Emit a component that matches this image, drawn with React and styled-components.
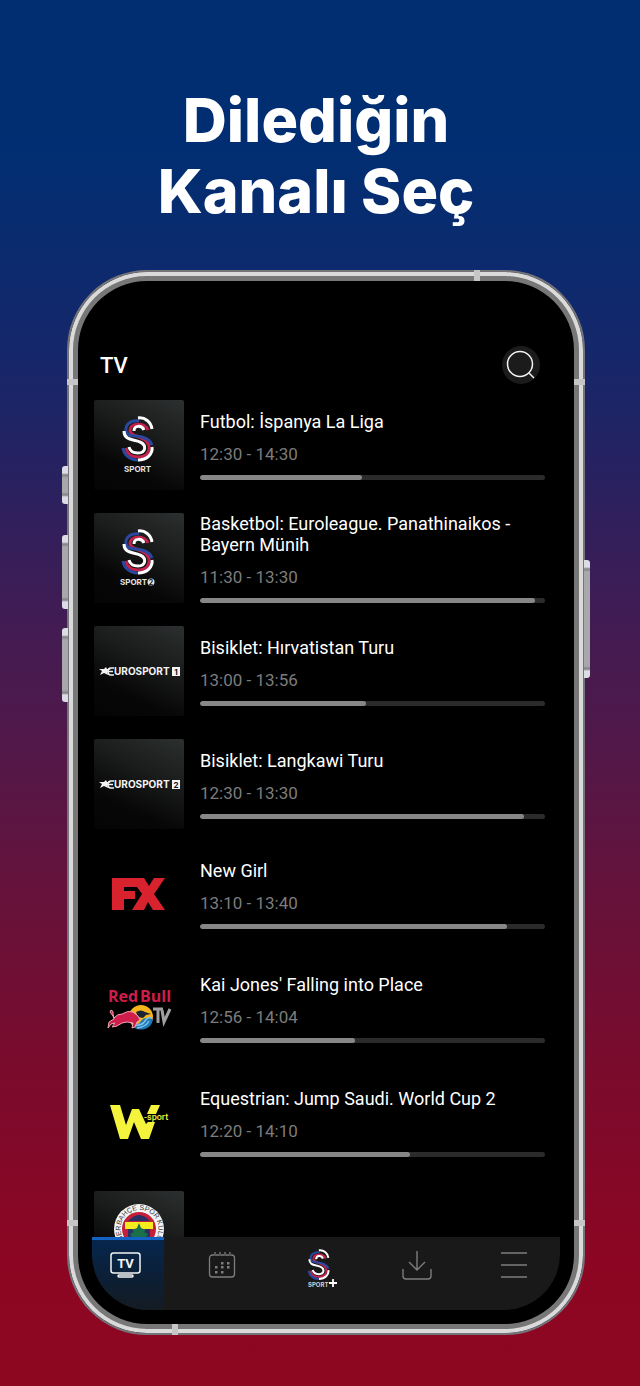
import styled, { createGlobalStyle, css } from "styled-components";

const GlobalStyle = createGlobalStyle`
  *, *::before, *::after {
    box-sizing: border-box;
    margin: 0;
    padding: 0;
  }

  body {
    font-family: Roboto, "Liberation Sans", sans-serif;
    color: #fff;
    background: #8e0721;
  }
`;

const Page = styled.main`
  display: flex;
  flex-direction: column;
  height: 100vh;
  min-height: 900px;
  padding: 85px 55px 51px 67px;
  background: linear-gradient(
    180deg,
    #012e70 0%,
    #012e72 11%,
    #16276a 26%,
    #2a215f 35%,
    #401c54 44%,
    #521849 54%,
    #681138 66%,
    #7c0b2c 78%,
    #8c0623 91%,
    #8e0721 100%
  );
`;

const Title = styled.h1`
  margin-bottom: 43px;
  padding-right: 20px;
  font-family: Inter, "Open Sans", sans-serif;
  font-size: 61px;
  font-weight: 800;
  line-height: 71px;
  text-align: center;
`;

const Phone = styled.div`
  position: relative;
  display: flex;
  flex: 1 1 0;
  flex-direction: column;
  min-height: 0;
  padding: 23px;
  border: 2px solid #74747a;
  border-radius: 80px;
  background: #000;
  box-shadow: inset 0 0 0 4px #dadada, inset 0 0 0 9px #777;
`;

const SideKey = styled.span`
  position: absolute;
  top: ${(props) => props.$top}px;
  width: 6px;
  height: ${(props) => props.$length}px;
  background: linear-gradient(
    #dcdce4 0 7px,
    #808086 9px,
    #a8a8ac 12px calc(100% - 12px),
    #808086 calc(100% - 9px),
    #dcdce4 calc(100% - 7px)
  );
  ${(props) =>
    props.$side === "left"
      ? css`
          left: -7px;
          border-radius: 3px 0 0 3px;
        `
      : css`
          right: -7px;
          border-radius: 0 3px 3px 0;
        `}
`;

const Antenna = styled.span`
  position: absolute;
  width: 11px;
  height: 6px;
  background: #c6c6c6;
  ${(props) => props.$place}
`;

const Screen = styled.div`
  display: flex;
  flex: 1 1 0;
  flex-direction: column;
  min-height: 0;
  border-radius: 16px 16px 56px 56px;
  overflow: hidden;
`;

const Header = styled.header`
  display: flex;
  align-items: center;
  justify-content: space-between;
  padding: 51px 20px 16px 8px;
`;

const Heading = styled.h2`
  font-size: 22px;
  font-weight: 500;
`;

const SearchButton = styled.button`
  display: grid;
  place-items: center;
  width: 38px;
  height: 38px;
  border: 0;
  border-radius: 50%;
  color: #f2f2f2;
  background: #1b1b1b;
`;

const Channels = styled.div`
  display: flex;
  flex: 1 1 0;
  flex-direction: column;
  gap: 20px;
  min-height: 0;
  padding: 0 15px 0 2px;
  overflow: hidden;
`;

const ChannelList = styled.ul`
  display: flex;
  flex: none;
  flex-direction: column;
  gap: ${(props) => props.$gap}px;
  list-style: none;
`;

const Channel = styled.li`
  display: grid;
  grid-template-columns: 90px 1fr;
  align-items: center;
  gap: 16px;
`;

const Tile = styled.div`
  height: 90px;
  border-radius: 2px;
  background: ${(props) =>
    props.$plain
      ? "#000"
      : "linear-gradient(205deg, #2d3030 0%, #1a1b1b 38%, #070707 72%, #040404 100%)"};

  & svg {
    display: block;
    width: 90px;
    height: 90px;
  }
`;

const Programme = styled.div`
  display: flex;
  flex-direction: column;
`;

const Name = styled.h3`
  font-size: 18px;
  font-weight: 400;
  line-height: 21px;
`;

const Time = styled.p`
  margin-top: 11px;
  color: #7c7c7c;
  font-size: 17px;
  line-height: 22px;
`;

const Progress = styled.progress`
  appearance: none;
  display: block;
  width: 100%;
  height: 5px;
  margin-top: 10px;
  border: 0;
  border-radius: 3px;
  overflow: hidden;

  &::-webkit-progress-bar {
    background: #2b2b2b;
  }

  &::-webkit-progress-value {
    border-radius: 3px;
    background: #878787;
  }
`;

const TabBar = styled.nav`
  display: flex;
  height: 73px;
  background: #191919;
`;

const Tab = styled.button`
  display: grid;
  place-items: start center;
  width: 30px;
  padding-top: 13px;
  border: 0;
  color: #7d7d7d;
  background: none;

  & svg {
    overflow: visible;
  }
`;

const ActiveTab = styled(Tab)`
  place-items: start;
  width: 72px;
  padding: 10px 0 0 18px;
  border-top: 3px solid #1463c4;
  color: #f4f4f4;
  background: linear-gradient(#06264d, #0c1f35 55%, #141b23);
`;

const OtherTabs = styled.div`
  display: flex;
  flex: 1;
  justify-content: space-between;
  padding: 0 31px 0 43px;
`;

function Strands() {
  return (
    <g fill="none" strokeWidth="3">
      <path d="M26 14C23 6 8 6 8 15C9 20 18 20 23 24C30 30 28 41 16 41C9 41 5 38 4 32" stroke="#c2214a" />
      <path d="M17 5C8 4 3 9 4 15C5 21 13 19 20 21C27 23 29 26 30 29" stroke="#2a48a0" />
      <path d="M16 2C23 1 29 6 30 13" stroke="#fff" />
      <path d="M22 14C20 9 12 9 12 15" stroke="#fff" />
      <path d="M2 15C2 25 12 23 18 26C25 29 24 37 16 37C11 37 8 35 7 31" stroke="#fff" />
      <path d="M30 31C31 38 25 44 16 44" stroke="#fff" />
      <path d="M16 44C8 44 2 39 1 32" stroke="#2a48a0" />
    </g>
  );
}

function SSport({ second }) {
  return (
    <svg viewBox="0 0 90 90" aria-hidden="true">
      <g transform="translate(28 16)">
        <Strands />
      </g>
      <text x={second ? 26 : 30} y="72" fill="#e4e4e4" fontFamily="Inter" fontSize="8" fontWeight="700">
        SPORT
      </text>
      {second && (
        <>
          <circle cx="57" cy="69" r="3.500" fill="#e4e4e4" />
          <text x="57" y="72" textAnchor="middle" fill="#111" fontFamily="Inter" fontSize="7" fontWeight="700">
            2
          </text>
        </>
      )}
    </svg>
  );
}

function Eurosport({ number }) {
  return (
    <svg viewBox="0 0 90 90" aria-hidden="true">
      <path d="M5 43h5l2-2 1 2h4l-4 2 1 4-4-2-4 2 2-4z" fill="#f4f4f4" />
      <path
        d="M20 42h-3q-3 0-3 3.500t3 3.500h3M12 45.500h7"
        fill="none"
        stroke="#f4f4f4"
        strokeWidth="1.600"
      />
      <text x="20" y="49" fill="#f4f4f4" fontFamily="Inter" fontSize="10" fontWeight="700">
        UROSPORT
      </text>
      <rect x="78" y="41" width="8" height="9" fill="#f4f4f4" />
      <text x="82" y="48.500" textAnchor="middle" fill="#111" fontFamily="Inter" fontSize="8" fontWeight="700">
        {number}
      </text>
    </svg>
  );
}

function Fx() {
  return (
    <svg viewBox="0 0 90 90" aria-hidden="true">
      <path
        d="M18 29h32l5 8 5-8h11L60 45l11 16H59l-5-8-4 8H38l10-16-5-7H30v4h11v8H30v11H18z"
        fill="#d8232e"
      />
    </svg>
  );
}

function RedBull() {
  return (
    <svg viewBox="0 0 90 90" aria-hidden="true">
      <text x="14" y="39" fill="#cf1d4c" fontFamily="Open Sans" fontSize="16" fontWeight="700">
        <tspan>Red</tspan>
        <tspan x="46">Bull</tspan>
      </text>
      <circle cx="47" cy="54" r="12" fill="#f6b51e" />
      <path d="M59 56a12 12 0 0 1-22 5q7 2 10-3t12-2z" fill="#1d79b5" />
      <path d="M40 62q8 1 11-4t7-3M43 65q9-1 12-7" fill="none" stroke="#7ec2e8" strokeWidth="1.500" />
      <path d="M42 49q5-3 9 0l6 2-5 1-3 3-5-1z" fill="#1c2631" />
      <path
        d="M17 47q3 1 2 4l1 4q3-4 8-4 6-4 11-2l5 4 2 4-3 2-2 5-3 1 1-5-6-1-5 1-5 3-5 1 3-4-4 1-3 4 1-6 5-3-1-3-3-4z"
        fill="#cf1d4c"
        stroke="#f0a4ac"
        strokeWidth="1"
      />
      <path d="M59 46h10M64 46v14M68 47l2 12 6-13" fill="none" stroke="#a0a0a0" strokeWidth="3" />
    </svg>
  );
}

function WSport() {
  return (
    <svg viewBox="0 0 90 90" aria-hidden="true">
      <path d="M16 28h10l6 20 6-16h7l7 15 2-2h7l-6 17h-8l-7-17-6 17h-8z" fill="#f5f43c" />
      <path d="M57 28h9l-4 9h-9z" fill="#f5f43c" />
      <text x="50" y="43" fill="#f5f43c" fontFamily="Roboto" fontSize="9" fontWeight="500">
        -sport
      </text>
    </svg>
  );
}

function Fenerbahce() {
  return (
    <svg viewBox="0 0 90 90" aria-hidden="true">
      <defs>
        <path id="crest" d="M45 57a19 19 0 1 1 1 0" />
      </defs>
      <circle cx="45" cy="38" r="25" fill="#f3f3f3" />
      <text fill="#333" fontFamily="Liberation Sans" fontSize="7">
        <textPath href="#crest" startOffset="50%" textAnchor="middle">
          FENERBAHÇE SPOR KULÜBÜ
        </textPath>
      </text>
      <circle cx="45" cy="38" r="17" fill="#c4203a" />
      <path d="M34 30q11-12 22 0z" fill="#2b2f63" />
      <path d="M31 31h28v7H31z" fill="#f4ec1c" />
      <path d="M34 38h22v12H34z" fill="#2b2f63" />
      <path d="M45 32l2 5 5 2-2 2 4 2-5 8h-8l-5-8 4-2-2-2 5-2z" fill="#1a7048" />
    </svg>
  );
}

function SearchIcon() {
  return (
    <svg width="30" height="30" viewBox="0 0 30 30" fill="none" stroke="currentColor" strokeWidth="1.500">
      <circle cx="14" cy="14" r="12.500" />
      <path d="M23 23l5 5" />
    </svg>
  );
}

function TvIcon() {
  return (
    <svg width="32" height="30" viewBox="0 0 32 30">
      <g fill="none" stroke="currentColor" strokeWidth="1.500">
        <rect x="1" y="3" width="29" height="20" rx="2.500" />
        <rect x="8" y="25" width="15" height="2" rx="1" />
      </g>
      <text x="15.500" y="18" textAnchor="middle" fill="currentColor" fontFamily="Roboto" fontSize="13" fontWeight="700">
        TV
      </text>
    </svg>
  );
}

function CalendarIcon() {
  return (
    <svg width="30" height="30" viewBox="0 0 30 30">
      <path
        d="M7 5H5.500a3 3 0 0 0-3 3v16a3 3 0 0 0 3 3h19a3 3 0 0 0 3-3V8a3 3 0 0 0-3-3H24M8 2v4M13 2v4M18 2v4M23 2v4M9 5h3M14 5h3M19 5h3"
        fill="none"
        stroke="currentColor"
        strokeWidth="1.300"
      />
      <path
        d="M14 12h2.500v2.500H14zM20 12h2.500v2.500H20zM8 16h2.500v2.500H8zM14 16h2.500v2.500H14zM20 16h2.500v2.500H20zM8 21h2.500v2.500H8zM14 21h2.500v2.500H14z"
        fill="currentColor"
      />
    </svg>
  );
}

function SPlusIcon() {
  return (
    <svg width="30" height="42" viewBox="0 0 30 42">
      <g transform="translate(4 -1) scale(0.680)">
        <Strands />
      </g>
      <text x="4" y="37" fill="#d0d0d0" fontFamily="Inter" fontSize="6" fontWeight="700">
        SPORT
      </text>
      <path d="M29 29v8M25 33h8" stroke="#fff" strokeWidth="1.800" />
    </svg>
  );
}

function DownloadIcon() {
  return (
    <svg width="30" height="30" viewBox="0 0 30 30" fill="none" stroke="currentColor" strokeWidth="1.400">
      <path d="M15 1v19M7 12l8 8 8-8M1 19v7a3 3 0 0 0 3 3h22a3 3 0 0 0 3-3v-7" />
    </svg>
  );
}

function MenuIcon() {
  return (
    <svg width="30" height="30" viewBox="0 0 30 30" fill="none" stroke="currentColor" strokeWidth="1.500">
      <path d="M2 3h26M2 15h26M2 27h26" />
    </svg>
  );
}

const sports = [
  { name: "Futbol: İspanya La Liga", time: "12:30 - 14:30", progress: 47, logo: <SSport /> },
  {
    name: "Basketbol: Euroleague. Panathinaikos - Bayern Münih",
    time: "11:30 - 13:30",
    progress: 97,
    logo: <SSport second />,
  },
  { name: "Bisiklet: Hırvatistan Turu", time: "13:00 - 13:56", progress: 48, logo: <Eurosport number="1" /> },
  { name: "Bisiklet: Langkawi Turu", time: "12:30 - 13:30", progress: 94, logo: <Eurosport number="2" /> },
];

const others = [
  { name: "New Girl", time: "13:10 - 13:40", progress: 89, logo: <Fx />, plain: true },
  { name: "Kai Jones' Falling into Place", time: "12:56 - 14:04", progress: 45, logo: <RedBull />, plain: true },
  {
    name: "Equestrian: Jump Saudi. World Cup 2",
    time: "12:20 - 14:10",
    progress: 61,
    logo: <WSport />,
    plain: true,
  },
];

function ChannelRow({ channel }) {
  return (
    <Channel>
      <Tile $plain={channel.plain}>{channel.logo}</Tile>
      <Programme>
        <Name>{channel.name}</Name>
        <Time>{channel.time}</Time>
        <Progress value={channel.progress} max="100" aria-label={channel.name} />
      </Programme>
    </Channel>
  );
}

export default function App() {
  return (
    <>
      <GlobalStyle />
      <Page>
        <Title>
          Dilediğin
          <br />
          Kanalı Seç
        </Title>
        <Phone>
          <SideKey $side="left" $top={194} $length={38} />
          <SideKey $side="left" $top={263} $length={74} />
          <SideKey $side="left" $top={356} $length={74} />
          <SideKey $side="right" $top={288} $length={118} />
          <Antenna $place="left: -2px; top: 107px;" />
          <Antenna $place="right: -2px; top: 107px;" />
          <Antenna $place="left: -2px; bottom: 107px;" />
          <Antenna $place="right: -2px; bottom: 107px;" />
          <Antenna $place="right: 103px; top: -2px; width: 6px; height: 11px;" />
          <Antenna $place="left: 103px; bottom: -2px; width: 6px; height: 11px;" />
          <Screen>
            <Header>
              <Heading>TV</Heading>
              <SearchButton aria-label="Ara">
                <SearchIcon />
              </SearchButton>
            </Header>
            <Channels>
              <ChannelList $gap={23}>
                {sports.map((channel) => (
                  <ChannelRow key={channel.name} channel={channel} />
                ))}
              </ChannelList>
              <ChannelList $gap={24}>
                {others.map((channel) => (
                  <ChannelRow key={channel.name} channel={channel} />
                ))}
                <Channel>
                  <Tile>
                    <Fenerbahce />
                  </Tile>
                </Channel>
              </ChannelList>
            </Channels>
            <TabBar>
              <ActiveTab aria-label="TV">
                <TvIcon />
              </ActiveTab>
              <OtherTabs>
                <Tab aria-label="Takvim">
                  <CalendarIcon />
                </Tab>
                <Tab aria-label="S Sport Plus">
                  <SPlusIcon />
                </Tab>
                <Tab aria-label="İndirilenler">
                  <DownloadIcon />
                </Tab>
                <Tab aria-label="Menü">
                  <MenuIcon />
                </Tab>
              </OtherTabs>
            </TabBar>
          </Screen>
        </Phone>
      </Page>
    </>
  );
}
